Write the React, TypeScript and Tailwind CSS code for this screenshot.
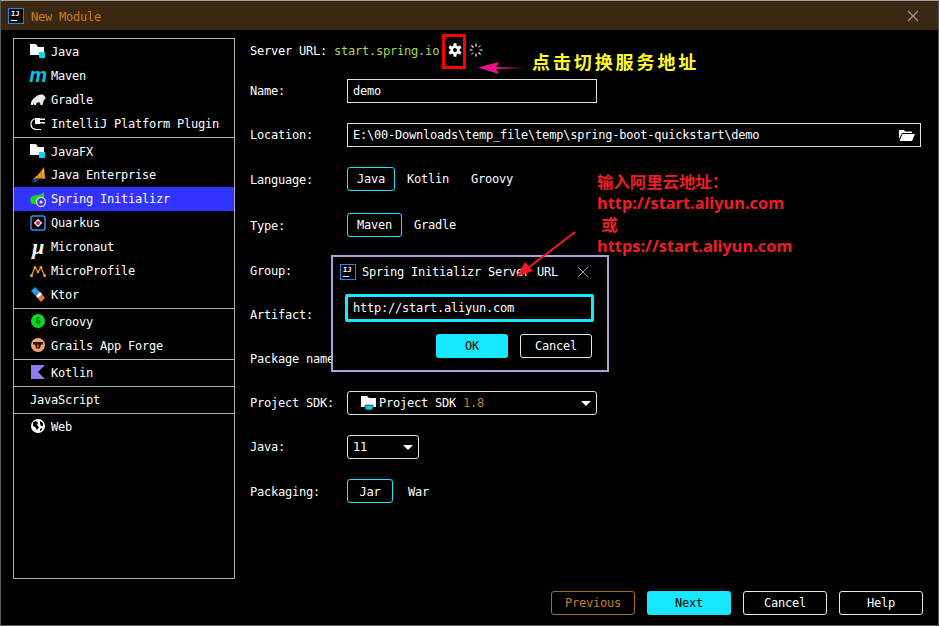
import { ReactNode } from 'react';

const mono = 'font-["DejaVu_Sans_Mono","Liberation_Mono",monospace] text-[12px] tracking-[-0.22px]';

// Small module folder with cyan badge
const FolderIcon = () => (
  <svg width="16" height="16" viewBox="0 0 16 16">
    <path d="M0 1h6l2 3h6v8H0z" fill="#fff" />
    <rect x="9" y="9" width="6" height="6" fill="#00d8f0" />
  </svg>
);

const GradleIcon = () => (
  <svg width="16" height="16" viewBox="0 0 16 16">
    <path d="M1 14c-.5-3 1-6 4-7.500C7 4 10 3 12 3.500c2 .5 3.500 2 3.500 3.500 0 1-.8 1.500-1.500 1.500-.5 2-1 4-1.500 5.500h-2l-.5-2.500H7L6 14H4l-.3-2L3 14z" fill="#e8e8e8" />
  </svg>
);

const PluginIcon = () => (
  <svg width="16" height="16" viewBox="0 0 16 16" fill="none">
    <path d="M7 3.500C3 3.500 1 6 1 9s2 5.500 6 5.500h4" stroke="#fff" strokeWidth="1.200" />
    <rect x="5" y="3" width="5" height="6" fill="#fff" />
    <rect x="10" y="3.500" width="5" height="1.500" fill="#fff" />
    <rect x="10" y="7" width="5" height="1.500" fill="#fff" />
  </svg>
);

const EnterpriseIcon = () => (
  <svg width="16" height="16" viewBox="0 0 16 16">
    <path d="M3 12C7 9 11 5 14 0l1 12c-4-1-8-1-12 0z" fill="#f5a623" />
    <path d="M8 8l1 4M11 5l1 7" stroke="#c9600f" strokeWidth="1" />
    <path d="M1 15l3-3 6 0-4 3z" fill="#1c3f94" />
  </svg>
);

const SpringIcon = () => (
  <svg width="16" height="16" viewBox="0 0 16 16">
    <path d="M0 8c1-3 4-4 7-4 3 0 5-1 7-3v7c0 3-3 5-6 5H2C1 11 0 10 0 8z" fill="#1fd11f" />
    <circle cx="11" cy="11" r="4.500" fill="#3333ff" stroke="#fff" strokeWidth="1.200" />
    <circle cx="11" cy="11" r="1.500" fill="#fff" />
  </svg>
);

const QuarkusIcon = () => (
  <svg width="16" height="16" viewBox="0 0 16 16" fill="none">
    <rect x="1" y="1" width="14" height="14" rx="2" stroke="#3d8fe0" strokeWidth="1.500" />
    <rect x="5" y="5" width="6" height="6" fill="#e8e8f8" transform="rotate(45 8 8)" />
    <circle cx="8" cy="8" r="2" fill="#e02040" />
  </svg>
);

const MicroProfileIcon = () => (
  <svg width="16" height="16" viewBox="0 0 16 16" fill="none">
    <path d="M1.500 12.500L5 4.500l3 4.500 3-4.500 3.500 8" stroke="#f0a030" strokeWidth="1.200" />
    <circle cx="1.500" cy="12.500" r="1.500" fill="#f0a030" />
    <circle cx="5" cy="4.500" r="1.500" fill="#f0a030" />
    <circle cx="8" cy="9" r="1.300" fill="#f0a030" />
    <circle cx="11" cy="4.500" r="1.500" fill="#f0a030" />
    <circle cx="14.500" cy="12.500" r="1.500" fill="#f0a030" />
  </svg>
);

const KtorIcon = () => (
  <svg width="16" height="16" viewBox="0 0 16 16">
    <path d="M5 0l5 5-4 4-5-5z" fill="#1c9be8" />
    <path d="M10 5l5 6-4 4-5-6z" fill="#f07840" />
    <path d="M6 9l4-4 2 2-4 4z" fill="#fff" />
  </svg>
);

const GroovyIcon = () => (
  <svg width="16" height="16" viewBox="0 0 16 16">
    <circle cx="8" cy="8" r="7" fill="#00dd1c" />
    <text x="8" y="11" textAnchor="middle" fontSize="8" fontWeight="bold" fill="#064a0c">G</text>
  </svg>
);

const GrailsIcon = () => (
  <svg width="16" height="16" viewBox="0 0 16 16">
    <circle cx="8" cy="8" r="7" fill="#f5a56a" />
    <path d="M3 5h10v2.500H3z" fill="#231008" />
    <path d="M5 7h6l-1 4.500H6z" fill="#231008" />
    <path d="M7.500 7.500h1v3h-1z" fill="#f5a56a" />
  </svg>
);

const KotlinIcon = () => (
  <svg width="16" height="16" viewBox="0 0 16 16">
    <path d="M1 1h14L8 8l7 7H1z" fill="#8f7bf0" />
  </svg>
);

const WebIcon = () => (
  <svg width="16" height="16" viewBox="0 0 16 16">
    <circle cx="8" cy="8" r="7" fill="#fff" />
    <path d="M3 4l3-1 2 2-1 2 2 2-2 3-2-3-2-1zM10 3l3 2 0 3-2 0-1-2zM10 11l2-1 0 2-2 1z" fill="#000" />
  </svg>
);

const LogoIJ = () => (
  <div className="shrink-0 w-4 h-4 bg-black border border-[#1e88e5] flex flex-col px-[2px] pt-px">
    <span className="font-['DejaVu_Sans_Mono',monospace] tracking-normal font-bold text-[7px] leading-[8px] text-white">IJ</span>
    <span className="block w-[6px] h-px bg-white mt-[2px]" />
  </div>
);

type Item = { label: string; icon: ReactNode; active?: boolean; high?: boolean };

const groups: { items: Item[]; cls: string }[] = [
  {
    cls: 'pb-[2px]',
    items: [
      { label: 'Java', icon: <FolderIcon /> },
      { label: 'Maven', icon: <span className="font-['Liberation_Sans'] italic font-bold text-[20px] leading-[14px] text-[#00c8e0]">m</span> },
      { label: 'Gradle', icon: <GradleIcon /> },
      { label: 'IntelliJ Platform Plugin', icon: <PluginIcon /> },
    ],
  },
  {
    cls: 'pt-px pb-px',
    items: [
      { label: 'JavaFX', icon: <FolderIcon /> },
      { label: 'Java Enterprise', icon: <EnterpriseIcon />, high: true },
      { label: 'Spring Initializr', icon: <SpringIcon />, active: true, high: true },
      { label: 'Quarkus', icon: <QuarkusIcon />, high: true },
      { label: 'Micronaut', icon: <span className="font-['Liberation_Serif'] italic font-bold text-[22px] leading-[8px] text-white">µ</span>, high: true },
      { label: 'MicroProfile', icon: <MicroProfileIcon />, high: true },
      { label: 'Ktor', icon: <KtorIcon />, high: true },
    ],
  },
  {
    cls: 'pb-[2px]',
    items: [
      { label: 'Groovy', icon: <GroovyIcon /> },
      { label: 'Grails App Forge', icon: <GrailsIcon /> },
    ],
  },
  { cls: 'pb-[2px]', items: [{ label: 'Kotlin', icon: <KotlinIcon /> }] },
  { cls: 'pb-[2px]', items: [{ label: 'JavaScript', icon: null }] },
  { cls: '', items: [{ label: 'Web', icon: <WebIcon /> }] },
];

function Sidebar() {
  return (
    <div className="w-[222px] h-[541px] shrink-0 border border-[#b0b0b0]">
      {groups.map((g, i) => (
        <div key={i} className={`${g.cls} ${i < groups.length - 1 ? 'border-b border-[#b0b0b0]' : ''}`}>
          {g.items.map((item) => (
            <div
              key={item.label}
              className={`h-6 flex items-center pl-4 ${item.active ? 'bg-[#3333ff]' : ''}`}
            >
              {item.icon && <span className="w-4 h-4 flex items-center justify-center mr-[5px] shrink-0">{item.icon}</span>}
              <span className={item.high ? '' : 'pt-[2px]'}>{item.label}</span>
            </div>
          ))}
        </div>
      ))}
    </div>
  );
}

const Label = ({ children, low }: { children: ReactNode; low?: boolean }) => (
  <div className={`w-[97px] shrink-0 ${low ? 'pt-[2px]' : ''}`}>{children}</div>
);

const Field = ({ value, className, children }: { value?: string; className: string; children?: ReactNode }) => (
  <div className={`h-6 border border-[#e0e0e0] flex items-center justify-between pl-[5px] pr-[5px] ${className}`}>
    <span>{value}</span>
    {children}
  </div>
);

const Toggle = ({ items, widths }: { items: string[]; widths: string[] }) => (
  <div className="flex items-center h-6">
    {items.map((t, i) =>
      i === 0 ? (
        <div key={t} className={`h-6 rounded-[3px] border border-[#18e8ff] flex items-center justify-center ${widths[i]}`}>
          {t}
        </div>
      ) : (
        <div key={t} className={widths[i]}>
          {t}
        </div>
      ),
    )}
  </div>
);

const Caret = () => <span className="w-0 h-0 border-x-[5px] border-x-transparent border-t-[5px] border-t-white" />;

const Btn = ({ children, variant }: { children: ReactNode; variant: 'primary' | 'plain' | 'muted' }) => {
  const look =
    variant === 'primary'
      ? 'bg-[#18e8ff] text-black'
      : variant === 'muted'
        ? 'border border-[#a86a18] text-[#c87d1c]'
        : 'border border-[#e8e8e8] text-white';
  return <div className={`w-[84px] h-6 rounded-[3px] flex items-center justify-center ${look}`}>{children}</div>;
};

function Form() {
  return (
    <div className="flex-1 pl-[15px]">
      <div className="flex items-center h-6">
        <span className="pt-[2px]">Server URL:</span>
        <span className="ml-[7px] pt-[2px] text-[#a8d848]">start.spring.io</span>
        <svg className="ml-[8px]" width="16" height="16" viewBox="0 0 24 24" fill="none" stroke="#fff" strokeWidth="4" strokeLinejoin="round">
          <circle cx="12" cy="12" r="5" />
          <path d="M12 2v5M12 17v5M3.300 7l4.400 2.500M16.300 14.500l4.400 2.500M3.300 17l4.400-2.500M16.300 9.500L20.700 7" strokeWidth="4.500" />
        </svg>
        <svg className="ml-[6px]" width="14" height="14" viewBox="0 0 14 14" stroke="#fff" strokeWidth="1.200">
          <path d="M7 0.500v3M7 10.500v3M0.500 7h3M10.500 7h3M2.400 2.400l2.100 2.100M9.500 9.500l2.100 2.100" />
          <path d="M2.400 11.600l2.100-2.100M9.500 4.500l2.100-2.100" stroke="#888" />
        </svg>
      </div>

      <div className="flex items-center mt-[17px]">
        <Label>Name:</Label>
        <Field value="demo" className="w-[250px]" />
      </div>
      <div className="flex items-center mt-5">
        <Label>Location:</Label>
        <Field value="E:\00-Downloads\temp_file\temp\spring-boot-quickstart\demo" className="w-[574px]">
          <svg width="16" height="14" viewBox="0 0 16 14">
            <path d="M0 2h5l1 1.500h7V5H3L0 11z" fill="#fff" />
            <path d="M3.500 6H16l-3 7H0.500z" fill="#fff" />
          </svg>
        </Field>
      </div>
      <div className="flex items-center mt-5">
        <Label low>Language:</Label>
        <Toggle items={['Java', 'Kotlin', 'Groovy']} widths={['w-[48px] mr-3', 'w-[64px]', '']} />
      </div>
      <div className="flex items-center mt-[22px]">
        <Label low>Type:</Label>
        <Toggle items={['Maven', 'Gradle']} widths={['w-[55px] mr-3', '']} />
      </div>
      {/* these three fields sit behind the dialog */}
      <div className="flex items-center mt-[21px]">
        <Label low>Group:</Label>
        <Field className="w-[250px]" />
      </div>
      <div className="flex items-center mt-5">
        <Label low>Artifact:</Label>
        <Field className="w-[250px]" />
      </div>
      <div className="flex items-center mt-5">
        <Label low>Package name:</Label>
        <Field className="w-[250px]" />
      </div>
      <div className="flex items-center mt-[21px]">
        <Label>Project SDK:</Label>
        <div className="w-[250px] h-6 rounded-[3px] border border-[#e0e0e0] flex items-center pl-[13px] pr-[5px]">
          <svg className="mr-[2px]" width="16" height="16" viewBox="0 0 16 16">
            <path d="M0 1h6l2 2h7v9H0z" fill="#fff" />
            <path d="M4 10h8v3a2 2 0 0 1-2 2H6a2 2 0 0 1-2-2z" fill="#00c8e0" stroke="#000" strokeWidth="0.500" />
          </svg>
          <span>Project SDK</span>
          <span className="ml-[7px] text-[#c87d1c]">1.8</span>
          <span className="ml-auto flex"><Caret /></span>
        </div>
      </div>
      <div className="flex items-center mt-5">
        <Label>Java:</Label>
        <div className="w-[72px] h-6 rounded-[3px] border border-[#e0e0e0] flex items-center justify-between pl-[5px] pr-[5px]">
          <span>11</span>
          <Caret />
        </div>
      </div>
      <div className="flex items-center mt-5">
        <Label low>Packaging:</Label>
        <Toggle items={['Jar', 'War']} widths={['w-[46px] mr-[15px] pt-[2px]', 'pt-[2px]']} />
      </div>
    </div>
  );
}

export default function App() {
  return (
    <div className={`relative w-[939px] h-[626px] overflow-hidden bg-black text-white flex flex-col border border-[#5a5a5a] border-t-[#a0a0a0] ${mono}`}>
      {/* Title bar */}
      <div className="h-[29px] shrink-0 bg-[#3b2812] flex items-center pl-[7px] pr-[19px]">
        <LogoIJ />
        <span className="ml-[7px] pt-[2px] text-[#c87d1c]">New Module</span>
        <svg className="ml-auto" width="12" height="12" viewBox="0 0 12 12" stroke="#9a9a9a" strokeWidth="1.200">
          <path d="M1 1l10 10M11 1L1 11" />
        </svg>
      </div>

      <div className="flex-1 flex pl-3 pt-2 relative">
        <Sidebar />
        <Form />
      </div>

      {/* Bottom buttons */}
      <div className="absolute right-[15px] bottom-[10px] flex gap-3">
        <Btn variant="muted">Previous</Btn>
        <Btn variant="primary">Next</Btn>
        <Btn variant="plain">Cancel</Btn>
        <Btn variant="plain">Help</Btn>
      </div>

      {/* Server URL dialog */}
      <div className="absolute left-[330px] top-[254px] w-[278px] h-[117px] bg-black border-2 border-[#b39ddb]">
        <div className="flex items-center h-[30px] pl-[7px] pr-[18px]">
          <LogoIJ />
          <span className="ml-[6px]">Spring Initializr Server URL</span>
          <svg className="ml-auto" width="12" height="12" viewBox="0 0 12 12" stroke="#9a9a9a" strokeWidth="1">
            <path d="M1 1l10 10M11 1L1 11" />
          </svg>
        </div>
        <div className="h-7 mt-[7px] ml-3 mr-[13px] rounded-[2px] border-[3px] border-[#18e8ff] flex items-center pl-[5px]">
          http://start.aliyun.com
        </div>
        <div className="flex justify-end gap-3 mt-3 pr-[15px]">
          <div className="w-[72px] h-6 rounded-[3px] bg-[#18e8ff] text-black flex items-center justify-center">OK</div>
          <div className="w-[72px] h-6 rounded-[3px] border border-[#e8e8e8] flex items-center justify-center">Cancel</div>
        </div>
      </div>

      {/* Screenshot annotations */}
      <div className="absolute left-[441px] top-[33px] w-6 h-[35px] border-[3px] border-[#ff0000]" />
      <svg className="absolute left-[470px] top-[55px]" width="60" height="24" viewBox="0 0 60 24">
        <path d="M7 11.500L28 6l-3 5 29 1-29 1 3 5z" fill="#f0108c" />
      </svg>
      <div className="absolute left-[531px] top-[47px] font-['Noto_Sans_CJK_SC',sans-serif] font-bold text-[18px] tracking-[2.9px] text-[#ffff20]">
        点击切换服务地址
      </div>
      <div className="absolute left-[596px] top-[170px] font-['Noto_Sans','Noto_Sans_CJK_SC',sans-serif] font-bold text-[16.4px] tracking-normal leading-[21.3px] text-[#ee1c25] whitespace-pre">
        {'输入阿里云地址：\nhttp://start.aliyun.com\n 或\nhttps://start.aliyun.com'}
      </div>
      <svg className="absolute left-[505px] top-[224px]" width="75" height="60" viewBox="0 0 75 60">
        <path d="M69 7L22 43" stroke="#ee1c25" strokeWidth="2" />
        <path d="M10 52l9-15 8 9z" fill="#ee1c25" />
      </svg>
    </div>
  );
}
